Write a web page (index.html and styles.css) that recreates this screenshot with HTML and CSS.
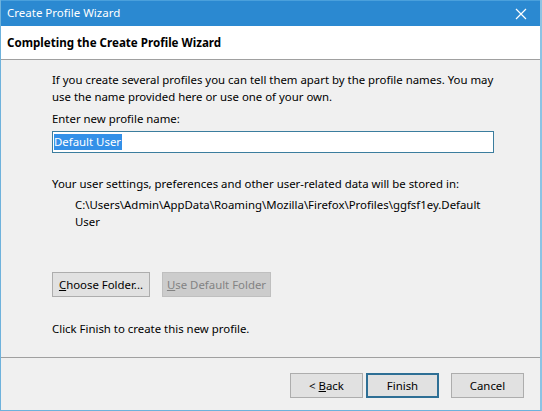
FILE: index.html
```html
<!DOCTYPE html>
<html>
<head>
<meta charset="utf-8">
<title>Create Profile Wizard</title>
<link rel="stylesheet" href="styles.css">
</head>
<body>
<div class="window">
  <div class="titlebar">
    <span class="title">Create Profile Wizard</span>
    <svg class="close" width="12" height="12" viewBox="0 0 12 12"><path d="M1 1L11 11M11 1L1 11" stroke="#ffffff" stroke-width="1.2" fill="none"/></svg>
  </div>
  <div class="header">Completing the Create Profile Wizard</div>
  <div class="content">
    <p class="intro">If you create several profiles you can tell them apart by the profile names. You may use the name provided here or use one of your own.</p>
    <p class="label">Enter new profile name:</p>
    <div class="input"><span class="sel">Default User</span></div>
    <p class="info">Your user settings, preferences and other user-related data will be stored in:</p>
    <p class="path">C:\Users\Admin\AppData\Roaming\Mozilla\Firefox\Profiles\ggfsf1ey.Default User</p>
    <div class="folder-buttons">
      <div class="btn choose"><span><u>C</u>hoose Folder...</span></div>
      <div class="btn disabled"><span><u>U</u>se Default Folder</span></div>
    </div>
    <p class="finish-note">Click Finish to create this new profile.</p>
  </div>
  <div class="footer">
    <div class="btn nav"><span>&lt; <u>B</u>ack</span></div>
    <div class="btn nav primary"><span>Finish</span></div>
    <div class="btn nav cancel"><span>Cancel</span></div>
  </div>
</div>
</body>
</html>
```

FILE: styles.css
```css
html, body {
  margin: 0;
  padding: 0;
}
body {
  width: 542px;
  height: 411px;
  overflow: hidden;
  background: #f0f0f0;
  font-family: "Noto Sans", "Open Sans", sans-serif;
  font-size: 11.4px;
  color: #000;
}
.window {
  box-sizing: border-box;
  width: 542px;
  height: 411px;
  display: flex;
  flex-direction: column;
  border-left: 1px solid #6eb2dc;
  border-right: 2px solid #8cc3e4;
  border-bottom: 1px solid #6eb2dc;
  background: #f0f0f0;
}
.titlebar {
  height: 26px;
  flex: none;
  background: #2b89d1;
  border-top: 1px solid #4aa0dc;
  box-sizing: border-box;
  display: flex;
  align-items: center;
  justify-content: space-between;
  padding: 0 13px 0 6px;
  color: #fff;
}
.title {
  font-size: 11.5px;
  line-height: 16px;
  margin-top: -1px;
}
.close {
  display: block;
}
.header {
  flex: none;
  height: 33px;
  background: #fff;
  border-bottom: 1px solid #a0a0a0;
  box-sizing: content-box;
  display: flex;
  align-items: center;
  padding-left: 6px;
  font-weight: bold;
  font-size: 11.6px;
}
.content {
  flex: 1;
  padding: 11px 20px 0 51px;
}
p {
  margin: 0;
  line-height: 17px;
}
.intro {
  width: 450px;
}
.label {
  margin-top: 5px;
}
.input {
  margin-top: 4px;
  height: 22px;
  box-sizing: border-box;
  border: 1px solid #3b7d9e;
  background: #fff;
  width: 442px;
  display: flex;
  align-items: center;
  padding-left: 1px;
}
.sel {
  background: #3390e8;
  color: #fff;
  line-height: 16px;
  padding-right: 1px;
}
.info {
  margin-top: 22px;
}
.path {
  margin-top: 4px;
  padding-left: 23px;
  width: 430px;
}
.folder-buttons {
  margin-top: 42px;
  display: flex;
  gap: 12px;
}
.btn {
  box-sizing: border-box;
  height: 25px;
  border: 1px solid #adadad;
  background: #e1e1e1;
  display: flex;
  align-items: center;
  justify-content: center;
  line-height: 16px;
}
.choose {
  width: 98px;
}
.disabled {
  width: 109px;
  background: #cccccc;
  border-color: #bfbfbf;
  color: #838383;
}
.finish-note {
  margin-top: 23px;
}
.footer {
  flex: none;
  height: 53px;
  box-sizing: border-box;
  border-top: 1px solid #a0a0a0;
  display: flex;
  padding: 15px 0 0 289px;
}
.nav {
  width: 73px;
}
.primary {
  margin-left: 3px;
  border: 2px solid #2e6f95;
}
.cancel {
  margin-left: 12px;
}
```
